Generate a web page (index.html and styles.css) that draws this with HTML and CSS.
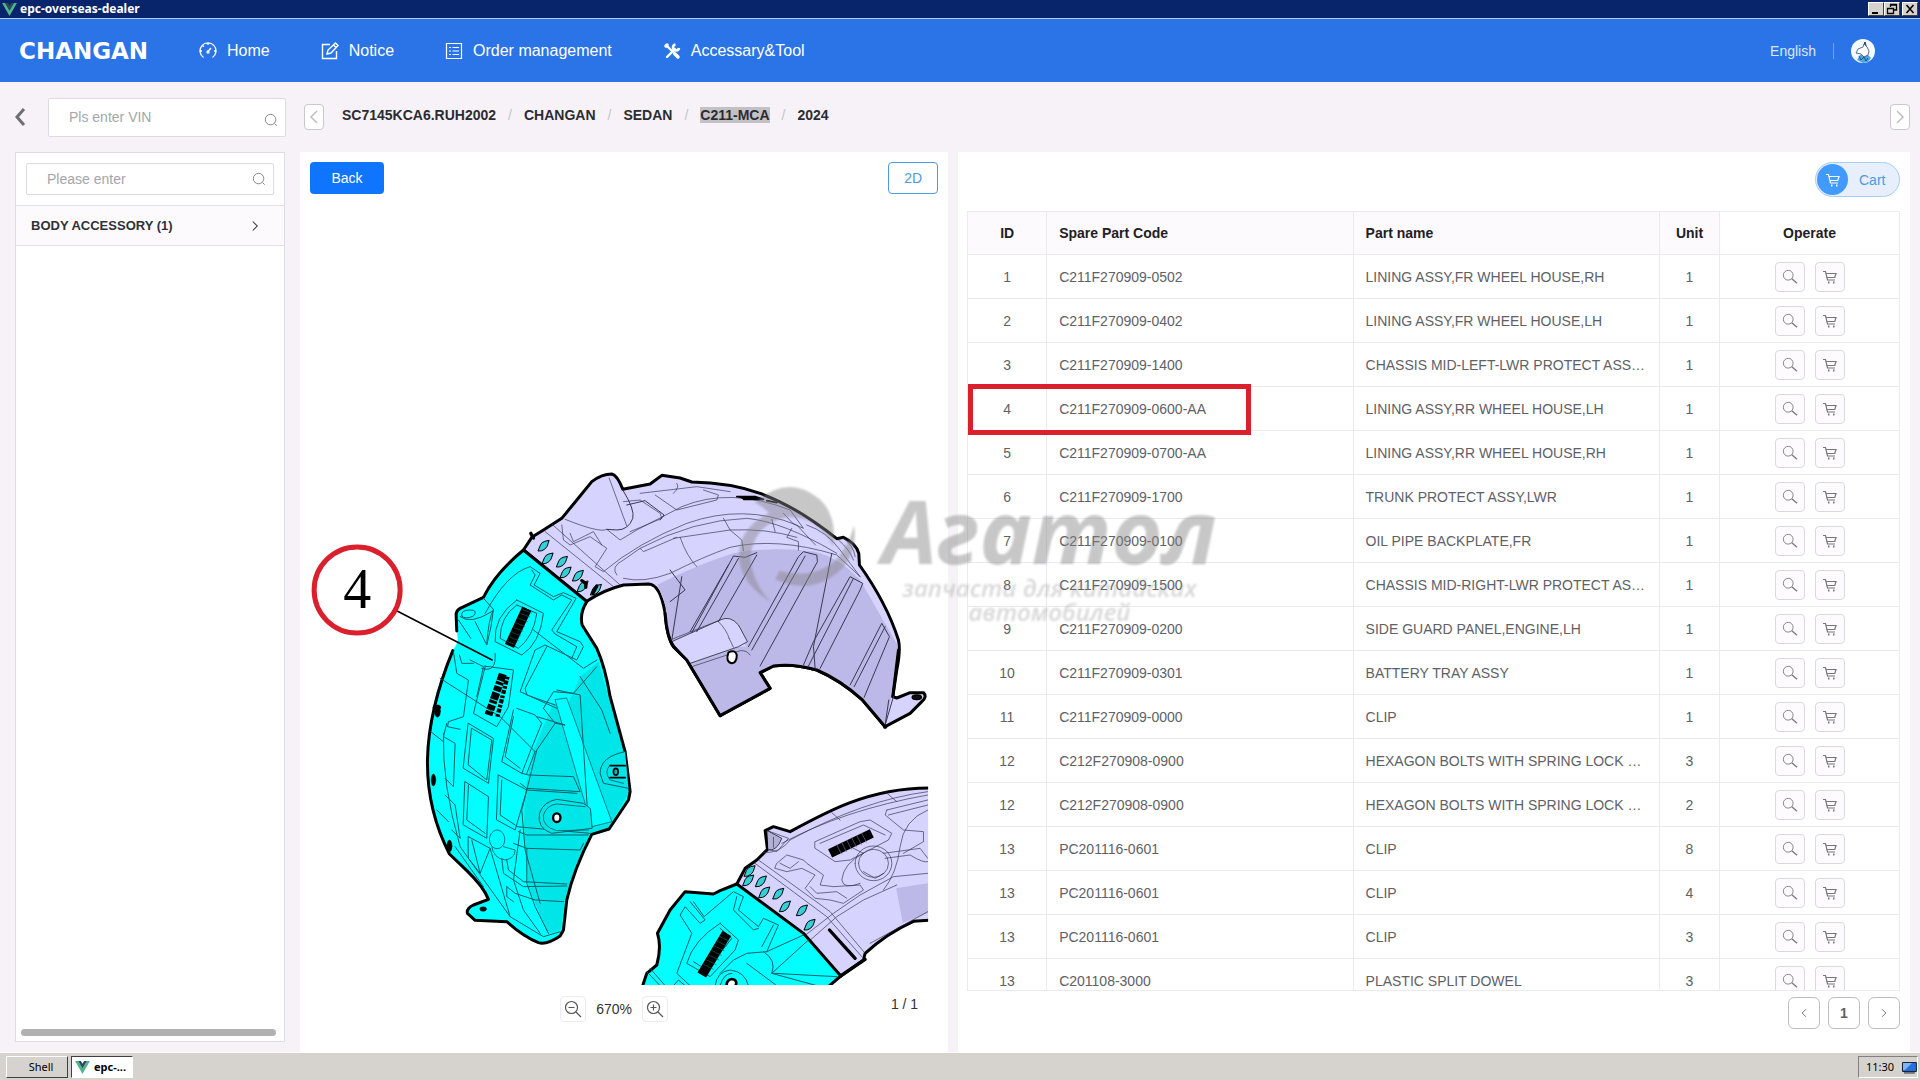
FILE: index.html
```html
<!DOCTYPE html>
<html lang="en">
<head>
<meta charset="utf-8">
<title>epc-overseas-dealer</title>
<link rel="stylesheet" href="styles.css">
</head>
<body>
<svg class="symbols" aria-hidden="true">
  <symbol id="vue" viewBox="0 0 16 14"><path fill="#4fb58c" d="M0 0h3.3L8 8.2 12.700 0H16L8 14z"/><path fill="#2c4a5c" d="M3.300 0h3L8 3l1.700-3h3L8 8.200z"/></symbol>
  <symbol id="lens" viewBox="0 0 16 16"><g fill="none" stroke="currentColor"><circle cx="7.500" cy="7.500" r="6"/><path d="M12 12l2.500 2.500"/></g></symbol>
  <symbol id="find" viewBox="0 0 18 18"><g fill="none" stroke="currentColor"><circle cx="7" cy="7" r="5.500"/><path d="M11 11l6 5" stroke-width="1.400"/></g></symbol>
  <symbol id="cart" viewBox="0 0 16 16"><g fill="none" stroke="currentColor" stroke-width="1.200"><path d="M1 2.500h2.500L5.500 11H13M4 4.500h10L12.800 8.500H5"/><path d="M6 13.500h1.500M11 13.500h1.500" stroke-width="2"/></g></symbol>
  <symbol id="left" viewBox="0 0 10 16"><path fill="none" stroke="currentColor" stroke-width="1.400" d="M8 2L2 8l6 6"/></symbol>
  <symbol id="right" viewBox="0 0 10 16"><path fill="none" stroke="currentColor" stroke-width="1.400" d="M2 2l6 6-6 6"/></symbol>
</svg>

<div class="titlebar">
  <svg class="vue"><use href="#vue"/></svg><span>epc-overseas-dealer</span>
  <div class="window-buttons">
    <button aria-label="Minimize"><svg viewBox="0 0 12 12"><path d="M2 10h6" stroke="#000" stroke-width="2"/></svg></button>
    <button aria-label="Restore"><svg viewBox="0 0 12 12"><path d="M4.500 4V2h6v5H8M4 1.500h7M1.500 5.500h6v5h-6zM1 5.500h7" fill="none" stroke="#000" stroke-width="1.300"/></svg></button>
    <button class="close" aria-label="Close"><svg viewBox="0 0 12 12"><path d="M2.500 2l7 8M9.500 2l-7 8" stroke="#000" stroke-width="1.600"/></svg></button>
  </div>
</div>

<header class="header">
  <a class="logo" href="#">CHANGAN</a>
  <nav class="nav">
    <a href="#"><svg viewBox="0 0 18 18"><g fill="none" stroke="currentColor" stroke-width="1.300"><path d="M4.500 15.500a8 8 0 1 1 9 0M9 9.500l3-3.500M9 1v2M1 9h2M15 9h2M3.500 3.500l1.300 1.300"/><circle cx="9" cy="10" r="1"/></g></svg>Home</a>
    <a href="#"><svg viewBox="0 0 18 18"><g fill="none" stroke="currentColor" stroke-width="1.400"><path d="M9 2.500H1.500v14h14V9"/><path d="M6 12l1-4 7.500-7 2.500 2.500-7 7.500zM12.500 3l2.500 2.500"/></g></svg>Notice</a>
    <a href="#"><svg viewBox="0 0 18 18"><path fill="none" stroke="currentColor" stroke-width="1.200" d="M1.500 1.500h15v15h-15zM4 5.500h2M7.500 5.500H14M4 9h2M7.500 9H14M4 12.500h2M7.500 12.500H14"/></svg>Order management</a>
    <a href="#"><svg viewBox="0 0 18 18"><path fill="none" stroke="currentColor" stroke-width="2.400" stroke-linecap="round" d="M4 4l4 4M4 15l8-8"/><path fill="none" stroke="currentColor" stroke-width="2.600" d="M12.500 2.500a3 3 0 1 0 3.500 3.500"/><path stroke="currentColor" stroke-width="3.500" stroke-linecap="round" d="M11.500 11.500L15 15M3 4l1-1"/></svg>Accessary&amp;Tool</a>
  </nav>
  <div class="account">
    <a href="#">English</a><i></i>
    <svg class="avatar" viewBox="0 0 24 24"><circle cx="12" cy="12" r="12" fill="#f4fbff"/><path d="M6 21l3-5 7-1 4 4-3 4-5 1z" fill="#48a5e8"/><path d="M12 8l2-5 1 4 1 1 2 4-1 4-4 2-3-3-5-1 2-4z" fill="#fff" stroke="#294a78" stroke-width=".8"/><path d="M13 6l1-3 1 4M8 17l2 4 3-3 2 4 2-3" fill="none" stroke="#294a78"/></svg>
  </div>
</header>

<div class="toolbar">
  <button class="back-arrow" aria-label="Back"><svg viewBox="0 0 12 18"><path d="M10 1L3 9l7 8" fill="none" stroke="#706e72" stroke-width="3"/></svg></button>
  <label class="field vin"><input type="text" placeholder="Pls enter VIN" aria-label="VIN"><svg><use href="#lens"/></svg></label>
  <button class="step" aria-label="Previous"><svg><use href="#left"/></svg></button>
  <nav class="crumbs" aria-label="Breadcrumb">
    <a href="#">SC7145KCA6.RUH2002</a><i>/</i><a href="#">CHANGAN</a><i>/</i><a href="#">SEDAN</a><i>/</i><a href="#" class="selected">C211-MCA</a><i>/</i><a href="#">2024</a>
  </nav>
  <button class="step" aria-label="Next"><svg><use href="#right"/></svg></button>
</div>

<main class="main">
  <aside class="sidebar">
    <label class="field"><input type="text" placeholder="Please enter" aria-label="Filter"><svg><use href="#lens"/></svg></label>
    <a class="group" href="#"><span>BODY ACCESSORY (1)</span><svg><use href="#right"/></svg></a>
    <div class="thumb"></div>
  </aside>

  <section class="viewer">
    <div class="viewer-top"><button class="primary">Back</button><button class="mode">2D</button></div>
    <svg class="drawing" viewBox="310 194 628 791" preserveAspectRatio="xMaxYMax meet" role="img" aria-label="Wheel house lining">
      <defs>
        <clipPath id="sheet"><path d="M310 194h618v791H310z"/></clipPath>
        <path id="slot" d="M-16 14L-9-3Q-5-12 4-14L17-17 11 1Q5 11-4 14z" fill="#35cfd6" stroke="#000" stroke-width="3"/>
      </defs>
      <g clip-path="url(#sheet)" stroke-linejoin="round" stroke-linecap="round">
        <g transform="translate(410 450) scale(.33333)" fill="none" stroke="#000">
          <!-- rear arch -->
          <path fill="#d6d3ff" stroke-width="9" d="M340 300L365 262 400 240 455 205 500 150 545 95Q575 72 605 72 622 76 638 118L720 102 755 76 810 84 845 96Q960 98 1050 130 1160 170 1280 266L1300 262Q1338 280 1346 310L1348 345Q1430 460 1465 570 1472 600 1460 660L1448 740 1460 744 1500 728 1540 728Q1552 740 1535 755L1500 790 1425 830 1355 748Q1290 690 1220 660 1150 640 1090 648L1050 668 1080 715 930 797 830 630 790 590Q770 560 765 490 750 402 715 402L640 405Q580 420 530 454z"/>
          <path fill="#bcb8e8" stroke="none" d="M742 404Q860 345 970 310 1080 288 1215 305 1290 325 1350 390L1462 585 1444 740 1425 826 1357 748Q1290 690 1220 660 1150 640 1090 648L1052 662 1000 575Q970 490 920 512L785 575Q762 520 768 470z"/>
          <path fill="#bcb8e8" stroke="none" d="M840 640L985 590 1016 590 1076 714 932 792z"/>
          <path fill="#d6d3ff" stroke-width="2" d="M785 575L930 510Q960 495 985 525L1012 575 985 590 840 640z"/>
          <path stroke-width="9" d="M790 590L830 630 930 797 1080 715 1050 668M1448 740L1465 600M765 490Q770 560 790 590M1355 748Q1290 690 1220 660 1150 640 1090 648L1050 668M1355 748L1425 830"/>
          <path stroke-width="2" stroke="#34334a" d="M780 570L840 546 930 510M845 650L990 602Q1010 600 1020 615M957 565Q950 540 925 515M957 565L970 592M597 84L650 228M465 208Q570 250 590 238L630 270 680 240 815 170Q960 110 1140 180L1180 235 1150 222 1120 190M690 130L860 110 960 125M640 155L690 150 750 190 755 205 660 245M735 135L800 180 920 150 925 135 880 120M405 245L610 410M425 222L630 405M455 225L460 270 480 285 540 260 590 295 555 350 580 365Q680 280 830 220 1000 160 1160 225L1216 285M480 250L490 275 550 245 575 285M620 375Q600 350 640 330L690 295Q850 210 1010 205 1120 215 1280 310M640 385Q700 400 780 370 880 320 960 292 1100 260 1280 315L1350 380M690 295L700 305 800 262M810 262Q830 320 860 350M940 205L960 240 995 270 1000 302M1085 208L1095 245M1145 235L1130 262 1165 275 1165 300M790 265L960 240Q1070 235 1160 262"/>
          <path stroke-width="3" stroke="#39374f" d="M638 120Q675 180 668 205 655 240 620 240L590 238M650 165L705 152 762 195 750 210M845 548L970 318 1005 322 1040 308M840 545L955 345M925 515L1040 315M860 545L985 325M1015 590L1165 320 1180 305 1220 315 1222 335 1050 648M1025 600L1185 318M1180 645L1210 575 1320 380 1358 400 1350 420 1230 655M1195 648L1330 385M1320 705L1415 520 1438 560 1362 742M1332 710L1425 530M1265 310L1210 590 1215 655M1450 740L1425 825M1436 750L1425 825M780 360L825 420 780 455M815 380L785 570"/>
          <path stroke-width="2" stroke="#34334a" d="M1190 225Q1250 245 1290 300 1320 340 1350 380M1285 270Q1320 300 1330 330M1300 265Q1330 285 1335 320M800 100Q810 110 790 130"/>
          <path fill="#000" stroke-width="5" d="M980 140L1035 140 1060 148 1000 148M1070 152L1100 158"/>
          <path fill="#fff" stroke-width="6" d="M955 607Q975 597 980 615 980 638 965 640 945 635 955 607z"/>
          <ellipse cx="1520" cy="742" rx="14" ry="7" fill="#111" stroke-width="4"/>
          <circle cx="930" cy="797" r="4" fill="#000"/><circle cx="1425" cy="830" r="6" fill="#000"/>
          <use href="#slot" x="400" y="288"/><use href="#slot" x="412" y="326"/><use href="#slot" x="455" y="336"/><use href="#slot" x="466" y="368"/><use href="#slot" x="503" y="378"/><use href="#slot" x="517" y="410"/><use href="#slot" x="557" y="420"/>
          <path stroke-width="10" d="M362 250l8 14M515 392l12 8v12M548 430l12-22"/>
          <!-- highlighted lining -->
          <path fill="#0ff" stroke="none" d="M340 300Q255 370 220 442L150 475Q136 485 138 500L143 575 128 602Q85 690 70 765 50 860 52 950 60 1100 118 1212L170 1262Q220 1310 235 1348L190 1365Q168 1378 172 1390L195 1411 290 1415 Q340 1460 385 1478 410 1482 450 1458L460 1440Q462 1380 475 1320 500 1230 545 1153L597 1137 655 1050 660 1025 645 905 605 760 575 630 Q560 590 520 540 508 500 530 455z"/>
          <path fill="#00e5e7" stroke="none" d="M565 635L600 760 640 900 657 1025 597 1130 470 770 510 680zM430 760L370 900 345 1020 340 1160 355 1310 380 1370 410 1450 452 1440 465 1350 500 1240 540 1150 597 1132 460 770z"/>
          <path fill="#0ff" stroke="#045" stroke-width="2" d="M435 750L545 1130 605 1115 470 745z"/>
          <path stroke-width="9" d="M530 455Q508 490 516 525L560 595Q585 650 600 740L645 905 650 945 660 1025 655 1050 597 1137 545 1153Q490 1260 470 1350L460 1440 450 1458Q410 1485 385 1478 340 1460 290 1415L195 1411 172 1390Q168 1376 190 1365L235 1348Q220 1310 170 1262L118 1212Q50 1080 52 930 55 780 128 602M140 543L138 495Q138 482 150 475L220 442Q255 370 340 300L530 455"/>
          <path stroke-width="3" stroke="#045f6a" d="M230 580Q235 510 250 478L220 445M150 500Q180 525 245 485M145 510L182 565M155 498Q150 480 180 480 205 480 190 498 165 510 155 498M250 478Q245 530 230 585L195 515M225 490Q290 370 360 350L390 370 372 405 430 440 460 428 498 445 440 545 510 575 520 590 500 630 405 585 375 600 330 725 440 775M365 360L375 375 360 405 430 450 455 435 485 450 425 540 435 552 500 590 485 625M320 450L400 490Q390 580 335 615L255 575Q250 500 320 450zM320 465L380 490Q370 560 325 595L270 565Q270 500 320 465M370 540L520 655 560 630M410 590L345 715 350 735 435 765M400 775L430 725 490 730 560 650M440 720L510 735 535 1130M510 680L575 780 600 850"/>
          <path stroke-width="3" stroke="#045f6a" d="M130 605L140 670 175 690 160 800 115 815 112 830 150 838M148 615L155 640 190 640M180 630L220 650 200 740M215 655Q260 670 255 610M222 648L310 660 295 770 260 830 190 790 225 650M62 845L100 875M90 685L270 800 375 905M110 820L100 860 135 880 130 1010 105 985M105 1035L135 1065 150 1165 125 1140M175 820L250 865 235 1000 160 955zM185 835L245 870 230 990 175 945zM165 995L235 1040 230 1165 160 1125zM175 1005L170 1110 225 1150M320 775L375 795 395 820 360 905 335 970 275 935 290 870 310 780M310 800L285 920 330 955M375 905L350 970M265 975L350 1020 315 1140 260 1110zM275 990L270 1095 315 1125M335 970L355 975 490 980 510 1025 350 1015 330 1000M350 1020L500 1030M400 775L435 820 465 825 380 800M435 820L380 900 335 1080 345 1200 390 1360M320 1130L540 1150M325 1145L350 1155 535 1155M310 1180L350 1195 510 1200 520 1180M330 1140L310 1290 340 1380 390 1450M350 1195L350 1300 375 1370 415 1450M275 1225L280 1270 340 1310 470 1308M290 1230L295 1260 340 1295 470 1302M290 1310L315 1330 375 1350 460 1355M290 1310L290 1340 310 1355M175 1160L240 1195 210 1270 175 1225zM185 1170L210 1270M80 1080L115 1115M100 850Q95 1000 150 1190L300 1400 400 1460 450 1445M240 1195L300 1400M135 1190L220 1310"/>
          <path fill="#00e5e7" stroke="#045f6a" stroke-width="3" d="M545 1135L425 1150Q380 1135 388 1090 400 1055 440 1048L520 1060 540 1075zM645 905Q570 920 570 970L580 1000 655 1015"/>
          <path stroke="#045f6a" stroke-width="2.500" d="M535 1140L440 1142Q395 1130 400 1095 410 1065 440 1062L525 1070M600 945Q580 965 600 990L640 1000M260 1140a23 28 0 1 0 2 0M280 1190l35 10q0 25-30 30-35-5-40-40"/>
          <path stroke-width="5" d="M600 947h45M600 983h45"/>
          <ellipse cx="440" cy="1103" rx="11" ry="13" fill="#fff" stroke-width="7"/><ellipse cx="617" cy="965" rx="7" ry="10" fill="#0bc" stroke-width="5"/><ellipse cx="219" cy="1377" rx="10" ry="7" fill="#111"/>
          <g fill="#000"><ellipse cx="82" cy="784" rx="9" ry="18"/><ellipse cx="70" cy="990" rx="7" ry="18"/><ellipse cx="118" cy="1188" rx="8" ry="18"/><ellipse cx="80" cy="772" rx="12" ry="8"/></g>
          <path stroke-width="30" stroke-linecap="butt" d="M350 476L298 588"/><path stroke="#066" stroke-width="2" d="M340 480l24 9M335 492l24 9M328 506l24 9M320 520l24 9M314 534l24 9M307 548l24 9M300 562l24 9M292 575l24 9"/>
          <path stroke-width="24" stroke-linecap="butt" stroke-dasharray="22 3 9 5 16 4" d="M278 672L235 795"/><path stroke-width="13" stroke-linecap="butt" stroke-dasharray="8 4 12 5" d="M292 680L262 800"/>
        </g>
        <g transform="translate(630 760) scale(.33333)" fill="none" stroke="#000">
          <!-- front arch, cut by the sheet edge -->
          <path fill="#d6d3ff" stroke-width="9" d="M320 372L345 325 380 300 412 268 405 212 430 200 480 215Q600 150 660 128 780 82 910 84L910 480 850 484Q770 520 705 580L700 600 632 648z"/>
          <path fill="#bcb8e8" stroke="none" d="M798 385L893 370V460L818 488z"/>
          <path fill="#b3b0d8" stroke-width="2" d="M412 212L455 235Q440 275 414 270z"/>
          <path stroke-width="2" stroke="#34334a" d="M412 212L475 235 440 275 415 268M430 232L430 262M385 300L600 455 705 580M372 308L590 470 695 590M400 278Q450 280 480 240 700 120 893 95M440 310L470 285 520 300 530 310 580 345 570 375 610 380 690 375 700 390 640 430 600 420 555 415 525 385 555 345 515 325 470 335 435 325zM450 310L480 325 505 305M540 380L560 400 620 395 650 415M555 245L690 185 720 180 785 220 775 240 660 300 615 305 555 265zM570 250L700 195 765 225M650 255L700 280Q640 310 635 360 640 390 690 370M675 310a55 52 0 1 0 110 0 55 52 0 1 0-110 0M685 310a45 42 0 1 0 90 0 45 42 0 1 0-90 0M700 335L735 355 760 340M760 280L870 265 893 295M765 295L840 285Q880 310 893 305M770 150L893 120M770 150L765 165 820 210 880 215 880 245 820 280M775 165L893 135M893 150Q820 180 810 260 800 340 760 390M520 530L610 460 690 405 790 350 893 340M535 545L620 470 700 420 800 375M605 158L630 180M765 95L800 125M455 250Q640 150 893 105M893 455L720 550"/>
          <path stroke-width="10" d="M598 510L675 595M632 648L705 598"/>
          <path stroke-width="28" stroke-linecap="butt" d="M600 280L725 220"/><path stroke="#777399" stroke-width="2" d="M620 255l14 27M635 248l14 27M650 241l14 27M665 234l14 27M680 227l14 27M695 220l14 27"/>
          <path fill="#0ff" stroke-width="9" d="M30 700L50 640 80 615Q95 560 82 520L120 450 165 395 250 402 270 392 320 372 520 520 632 648 560 710z"/>
          <use href="#slot" x="358" y="334"/><use href="#slot" x="354" y="362"/><use href="#slot" x="392" y="365"/><use href="#slot" x="402" y="398"/><use href="#slot" x="444" y="402"/><use href="#slot" x="464" y="440"/><use href="#slot" x="515" y="452"/><use href="#slot" x="538" y="495"/>
          <path stroke-width="3" stroke="#045f6a" d="M180 425L225 480 210 490 165 440 150 465 185 520 140 640 180 677M190 425L222 470 310 395 340 410 325 450 385 500 400 475 445 495 410 575 350 580 310 600 270 640M320 410L310 450 370 510 385 505M430 495L395 560M270 490L325 540 315 570 240 650 170 610Q190 540 270 490zM270 505L305 535 230 630 190 605M400 575Q440 600 425 640L560 677M430 640L620 650M535 540L425 640M520 525L410 575M60 625L105 677M50 635L90 677M255 677Q260 635 300 630 345 635 355 677M270 677Q280 640 305 640M350 610L440 677M130 677L145 660 165 677"/>
          <path stroke-width="30" stroke-linecap="butt" d="M290 520L215 645"/><path stroke="#066" stroke-width="2" d="M270 530l28 14M262 544l28 14M254 558l28 14M246 572l28 14M238 586l28 14M230 600l28 14M222 614l28 14"/>
          <path fill="#fff" stroke-width="8" d="M290 690Q285 660 305 657 325 660 315 680"/>
        </g>
        <path d="M397 611L492 660" stroke="#000" stroke-width="1.500"/>
        <circle cx="357" cy="590" r="43" fill="#fff" stroke="#d9202c" stroke-width="5"/>
        <text class="callout" x="357" y="608" text-anchor="middle">4</text>
      </g>
    </svg>
    <div class="viewer-foot">
      <div class="zoom"><button aria-label="Zoom out"><svg viewBox="0 0 18 18"><g fill="none" stroke="#555" stroke-width="1.200"><circle cx="7.500" cy="7.500" r="6"/><path d="M4.500 7.500h6M12 12l5 5"/></g></svg></button><span>670%</span><button aria-label="Zoom in"><svg viewBox="0 0 18 18"><g fill="none" stroke="#555" stroke-width="1.200"><circle cx="7.500" cy="7.500" r="6"/><path d="M4.500 7.500h6M7.500 4.500v6M12 12l5 5"/></g></svg></button></div>
      <span class="pages">1 / 1</span>
    </div>
  </section>

  <section class="parts">
    <button class="cart"><b><svg><use href="#cart"/></svg></b>Cart</button>
    <div class="table-wrap">
      <table>
        <colgroup><col class="c-id"><col class="c-code"><col class="c-name"><col class="c-unit"><col class="c-op"></colgroup>
        <thead><tr><th>ID</th><th>Spare Part Code</th><th>Part name</th><th>Unit</th><th>Operate</th></tr></thead>
        <tbody>
          <tr><td>1</td><td>C211F270909-0502</td><td>LINING ASSY,FR WHEEL HOUSE,RH</td><td>1</td><td><button aria-label="View"><svg><use href="#find"/></svg></button><button aria-label="Add"><svg><use href="#cart"/></svg></button></td></tr>
          <tr><td>2</td><td>C211F270909-0402</td><td>LINING ASSY,FR WHEEL HOUSE,LH</td><td>1</td><td><button aria-label="View"><svg><use href="#find"/></svg></button><button aria-label="Add"><svg><use href="#cart"/></svg></button></td></tr>
          <tr><td>3</td><td>C211F270909-1400</td><td>CHASSIS MID-LEFT-LWR PROTECT ASSY,LH</td><td>1</td><td><button aria-label="View"><svg><use href="#find"/></svg></button><button aria-label="Add"><svg><use href="#cart"/></svg></button></td></tr>
          <tr><td>4</td><td>C211F270909-0600-AA</td><td>LINING ASSY,RR WHEEL HOUSE,LH</td><td>1</td><td><button aria-label="View"><svg><use href="#find"/></svg></button><button aria-label="Add"><svg><use href="#cart"/></svg></button></td></tr>
          <tr><td>5</td><td>C211F270909-0700-AA</td><td>LINING ASSY,RR WHEEL HOUSE,RH</td><td>1</td><td><button aria-label="View"><svg><use href="#find"/></svg></button><button aria-label="Add"><svg><use href="#cart"/></svg></button></td></tr>
          <tr><td>6</td><td>C211F270909-1700</td><td>TRUNK PROTECT ASSY,LWR</td><td>1</td><td><button aria-label="View"><svg><use href="#find"/></svg></button><button aria-label="Add"><svg><use href="#cart"/></svg></button></td></tr>
          <tr><td>7</td><td>C211F270909-0100</td><td>OIL PIPE BACKPLATE,FR</td><td>1</td><td><button aria-label="View"><svg><use href="#find"/></svg></button><button aria-label="Add"><svg><use href="#cart"/></svg></button></td></tr>
          <tr><td>8</td><td>C211F270909-1500</td><td>CHASSIS MID-RIGHT-LWR PROTECT ASSY</td><td>1</td><td><button aria-label="View"><svg><use href="#find"/></svg></button><button aria-label="Add"><svg><use href="#cart"/></svg></button></td></tr>
          <tr><td>9</td><td>C211F270909-0200</td><td>SIDE GUARD PANEL,ENGINE,LH</td><td>1</td><td><button aria-label="View"><svg><use href="#find"/></svg></button><button aria-label="Add"><svg><use href="#cart"/></svg></button></td></tr>
          <tr><td>10</td><td>C211F270909-0301</td><td>BATTERY TRAY ASSY</td><td>1</td><td><button aria-label="View"><svg><use href="#find"/></svg></button><button aria-label="Add"><svg><use href="#cart"/></svg></button></td></tr>
          <tr><td>11</td><td>C211F270909-0000</td><td>CLIP</td><td>1</td><td><button aria-label="View"><svg><use href="#find"/></svg></button><button aria-label="Add"><svg><use href="#cart"/></svg></button></td></tr>
          <tr><td>12</td><td>C212F270908-0900</td><td>HEXAGON BOLTS WITH SPRING LOCK WASHER</td><td>3</td><td><button aria-label="View"><svg><use href="#find"/></svg></button><button aria-label="Add"><svg><use href="#cart"/></svg></button></td></tr>
          <tr><td>12</td><td>C212F270908-0900</td><td>HEXAGON BOLTS WITH SPRING LOCK WASHER</td><td>2</td><td><button aria-label="View"><svg><use href="#find"/></svg></button><button aria-label="Add"><svg><use href="#cart"/></svg></button></td></tr>
          <tr><td>13</td><td>PC201116-0601</td><td>CLIP</td><td>8</td><td><button aria-label="View"><svg><use href="#find"/></svg></button><button aria-label="Add"><svg><use href="#cart"/></svg></button></td></tr>
          <tr><td>13</td><td>PC201116-0601</td><td>CLIP</td><td>4</td><td><button aria-label="View"><svg><use href="#find"/></svg></button><button aria-label="Add"><svg><use href="#cart"/></svg></button></td></tr>
          <tr><td>13</td><td>PC201116-0601</td><td>CLIP</td><td>3</td><td><button aria-label="View"><svg><use href="#find"/></svg></button><button aria-label="Add"><svg><use href="#cart"/></svg></button></td></tr>
          <tr><td>13</td><td>C201108-3000</td><td>PLASTIC SPLIT DOWEL</td><td>3</td><td><button aria-label="View"><svg><use href="#find"/></svg></button><button aria-label="Add"><svg><use href="#cart"/></svg></button></td></tr>
        </tbody>
      </table>
      <div class="marker"></div>
    </div>
    <div class="pagination"><button aria-label="Previous page"><svg><use href="#left"/></svg></button><button class="current">1</button><button aria-label="Next page"><svg><use href="#right"/></svg></button></div>
  </section>

  <div class="watermark" aria-hidden="true">
    <svg viewBox="0 0 110 110"><path d="M16 18Q48-10 78 14 96 30 92 60 76 30 46 32 14 40 12 72 14 96 32 114-4 92 2 60 6 40 30 28 22 20 16 18zM40 84Q70 92 92 76 106 62 112 40 116 66 98 84 70 108 36 92z"/></svg>
    <div><strong>Агатол</strong><em>запчасти для китайских<br>автомобилей</em></div>
  </div>
</main>

<footer class="taskbar">
  <button>Shell</button>
  <button class="active"><svg class="vue"><use href="#vue"/></svg>epc-...</button>
  <div class="tray"><span>11:30</span><svg viewBox="0 0 16 13"><path fill="#2b6fdc" stroke="#123" d="M1.500 1.500h14v9h-14z"/><path fill="#7fb4f5" d="M2 2h9L4 9H2z"/><path d="M3 12h11" stroke="#223"/></svg></div>
</footer>
</body>
</html>
```
FILE: styles.css
```css
* { box-sizing: border-box; }
body {
  margin: 0; height: 100vh; display: flex; flex-direction: column; overflow: hidden;
  background: #f6f2f7; color: #606166;
  font: 14px/20px "Liberation Sans", Arial, sans-serif;
}
button, input { font: inherit; color: inherit; padding: 0; border: 0; background: none; }
a { color: inherit; text-decoration: none; }
i { font-style: normal; }
.symbols { display: none; }

.titlebar {
  flex: none; height: 19px; padding: 0 2px; display: flex; align-items: center; gap: 3px;
  background: #08246b; border-bottom: 1px solid #b8cdea; color: #fff;
  font: bold 12px/18px "Noto Sans", sans-serif;
}
.vue { width: 15px; height: 13px; }
.window-buttons { margin-left: auto; display: flex; }
.window-buttons button { width: 16px; height: 14px; background: #d6d3ce; border: 1px solid; border-color: #fff #404040 #404040 #fff; display: grid; place-items: center; }
.window-buttons svg { width: 12px; height: 12px; }
.window-buttons .close { margin-left: 2px; }

.header { flex: none; height: 63px; padding: 0 45px 0 19px; display: flex; align-items: center; background: #2a74e7; color: #fff; }
.logo { width: 180px; font: bold 23px/24px "DejaVu Sans", sans-serif; }
.nav { display: flex; gap: 51px; font-size: 16px; }
.nav a { display: flex; align-items: center; gap: 10px; }
.nav svg { width: 18px; height: 18px; }
.account { margin-left: auto; display: flex; align-items: center; gap: 17px; color: #dbe8fc; }
.account i { width: 1px; height: 16px; background: #6fa2f0; }
.avatar { width: 24px; height: 24px; }

.toolbar { flex: none; height: 70px; padding: 0 10px 0 14px; display: flex; align-items: center; }
.back-arrow { width: 12px; height: 18px; margin-right: 22px; }
.back-arrow svg { width: 12px; height: 18px; display: block; }
.field { display: flex; align-items: center; background: #fff; border: 1px solid #dcdde2; border-radius: 2px; height: 32px; padding: 0 7px 0 20px; }
.field input { flex: 1; min-width: 0; outline: 0; }
.field input::placeholder { color: #a4a6ab; opacity: 1; }
.field svg { width: 14px; height: 14px; color: #777; }
.vin { width: 238px; height: 39px; margin-right: 18px; }
.vin svg { margin-top: 6px; }
.step { width: 20px; height: 26px; background: #fff; border: 1px solid #c8c8ce; border-radius: 4px; display: grid; place-items: center; color: #b9b9c0; }
.step svg { width: 10px; height: 16px; }
.crumbs { flex: 1; padding: 0 18px 4px; display: flex; font-weight: bold; line-height: 16px; color: #2b2c30; }
.crumbs i { padding: 0 12px; color: #c4c4ca; font-weight: normal; }
.selected { background: #c3c1c4; }

.main { flex: 1; min-height: 0; display: grid; grid-template-columns: 270px 648fr 952fr; padding: 0 10px 0 15px; position: relative; }
.sidebar { background: #fff; border: 1px solid #dcdde2; margin-bottom: 10px; display: flex; flex-direction: column; }
.sidebar .field { margin: 10px; }
.group { height: 41px; padding: 0 24px 0 15px; display: flex; align-items: center; justify-content: space-between; border: solid #e2e2e6; border-width: 1px 0; background: #fdfafe; font-size: 13px; color: #303136; font-weight: bold; }
.group svg { width: 10px; height: 12px; }
.thumb { margin: auto 8px 5px 5px; height: 7px; border-radius: 4px; background: #b1b1b1; }

.viewer { background: #fff; margin-left: 15px; margin-right: -5px; padding: 10px; padding-bottom: 0; display: flex; flex-direction: column; min-height: 0; }
.viewer-top { display: flex; justify-content: space-between; }
.primary { width: 74px; height: 32px; border-radius: 4px; background: #0f75ff; color: #fff; }
.mode { width: 50px; height: 32px; border: 1px solid #4b9be0; border-radius: 4px; color: #4b9be0; }
.drawing { flex: 1; min-height: 0; width: 100%; }
.callout { font: 56px "Liberation Serif", serif; fill: #000; }
.viewer-foot { flex: none; height: 67px; padding: 11px 20px 0 0; display: grid; grid-template-columns: 1fr auto 1fr; align-items: start; color: #333; }
.zoom { grid-column: 2; display: flex; align-items: center; gap: 10px; }
.zoom button { width: 26px; height: 26px; border: 1px solid #eee9f2; border-radius: 4px; display: grid; place-items: center; }
.zoom svg { width: 18px; height: 18px; }
.pages { justify-self: end; line-height: 16px; }

.parts { background: #fff; margin-left: 15px; padding: 10px 10px 23px; display: flex; flex-direction: column; min-height: 0; }
.cart { align-self: flex-end; width: 85px; height: 35px; border: 1px solid #a9ccf4; border-radius: 18px; background: #e6effb; color: #4b9be0; display: flex; align-items: center; gap: 11px; padding-left: 1px; }
.cart b { width: 31px; height: 31px; border-radius: 50%; background: #419bff; color: #fff; display: grid; place-items: center; }
.cart svg { width: 16px; height: 16px; }
.table-wrap { position: relative; flex: 1; min-height: 0; margin: 14px 0 6px -1px; overflow: hidden; border: 1px solid #ebebef; border-right-width: 0; }
table { width: 100%; table-layout: fixed; border-collapse: separate; border-spacing: 0; }
.c-id { width: 79px; } .c-unit { width: 60px; } .c-op { width: 180px; }
th, td { height: 44px; padding: 0 12px; border: solid #ebebef; border-width: 0 1px 1px 0; text-align: left; overflow: hidden; white-space: nowrap; text-overflow: ellipsis; }
th { height: 43px; background: #fdfafe; color: #1f2024; }
th:last-child { background: #fff; }
th:nth-child(1), td:nth-child(1), th:nth-child(4), td:nth-child(4), th:nth-child(5), td:nth-child(5) { text-align: center; }
td:nth-child(5) { line-height: 0; }
td button { width: 30px; height: 30px; border: 1px solid #dcd8e2; border-radius: 4px; background: #fdfbfe; color: #77757d; margin: 0 5px; vertical-align: middle; }
td svg { width: 16px; height: 16px; vertical-align: middle; }
.marker { position: absolute; left: 0; top: 172px; width: 283px; height: 51px; border: 5px solid #d9202c; }
.pagination { display: flex; justify-content: flex-end; gap: 8px; }
.pagination button { width: 32px; height: 32px; border: 1px solid #bdbdc2; border-radius: 6px; display: grid; place-items: center; }
.pagination svg { width: 8px; height: 10px; }
.pagination .current { font-weight: bold; }

.watermark { position: absolute; left: 738px; top: 332px; display: flex; gap: 30px; color: #858585; fill: #858585; opacity: .45; filter: blur(1px); pointer-events: none; }
.watermark svg { width: 114px; height: 114px; overflow: visible; }
.watermark div { display: flex; flex-direction: column; align-items: center; font-family: "Open Sans", sans-serif; }
.watermark strong { font-size: 88px; line-height: 92px; font-style: italic; }
.watermark em { font-size: 24px; line-height: 24px; text-align: center; opacity: .7; font-weight: 600; }

.taskbar { flex: none; height: 28px; padding: 3px 2px 2px 6px; display: flex; gap: 3px; background: #d6d3ce; border-top: 1px solid #fff; color: #000; font: 11px/20px "Noto Sans", sans-serif; }
.taskbar button { width: 62px; height: 22px; border: 1px solid; border-color: #fff #404040 #404040 #fff; padding-left: 8px; }
.taskbar .active { background: #fff; border-color: #404040 #fff #fff #404040; font-weight: bold; display: flex; align-items: center; gap: 4px; padding-left: 3px; }
.tray { margin-left: auto; width: 60px; height: 22px; padding-left: 7px; border: 1px solid; border-color: #808080 #fff #fff #808080; display: flex; align-items: center; gap: 7px; }
.tray svg { width: 16px; height: 13px; }
```
